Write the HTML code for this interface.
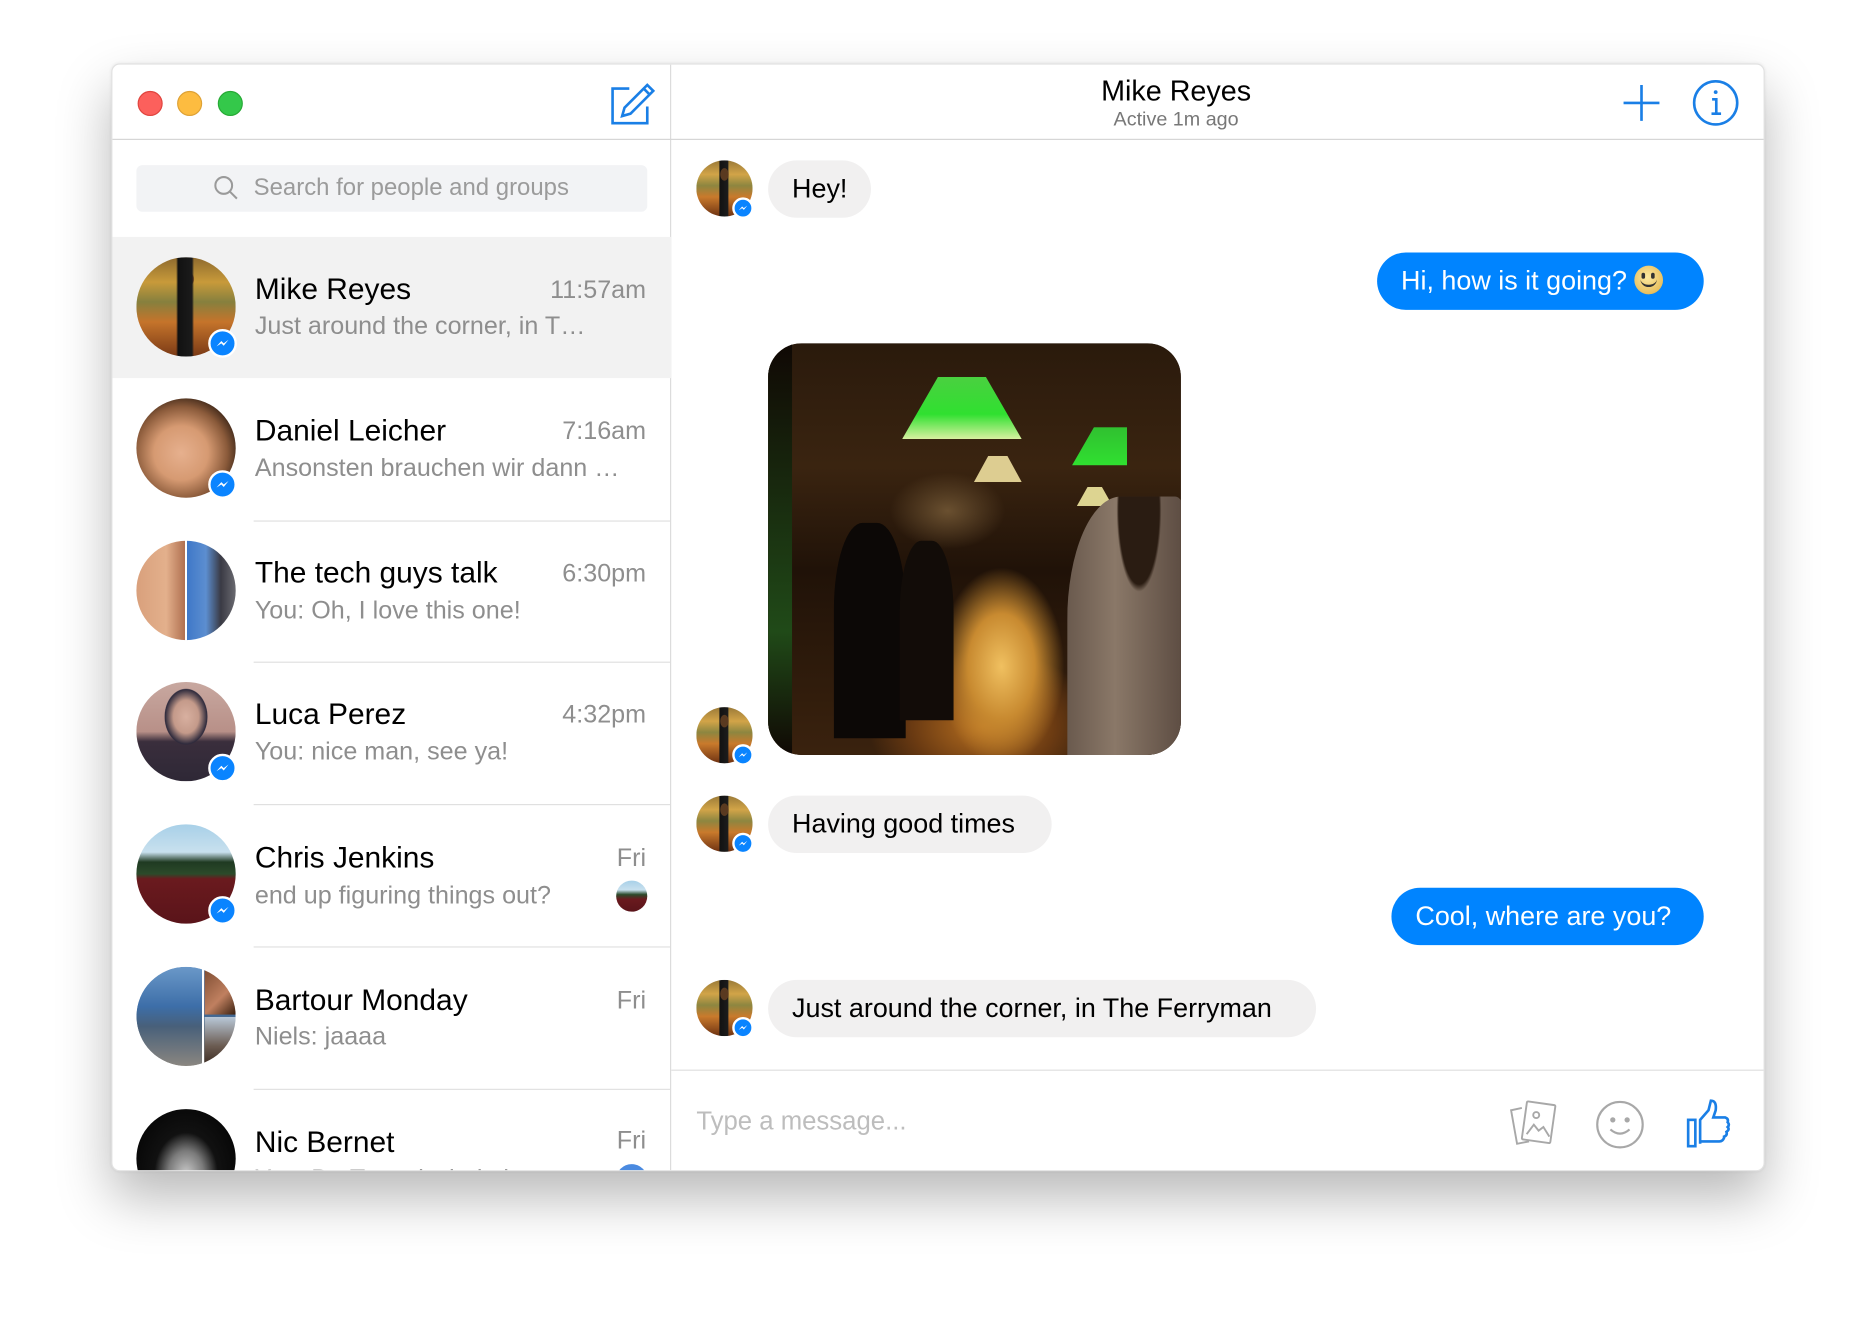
<!DOCTYPE html>
<html><head><meta charset="utf-8"><style>
*{box-sizing:border-box;margin:0;padding:0}
html,body{width:1876px;height:1332px;overflow:hidden;background:#fff;font-family:"Liberation Sans",Arial,sans-serif}
#stage{position:absolute;left:0;top:0;width:1568px;height:1114px;transform:scale(1.19643);transform-origin:0 0}
.win{position:absolute;left:93px;top:53px;width:1382px;height:926px;background:#fff;border-radius:7px;border:1px solid #e2e2e2;overflow:hidden;box-shadow:0 22px 45px rgba(0,0,0,.28),0 0 3px rgba(0,0,0,.08)}
.abs{position:absolute}
.dot{position:absolute;top:22px;width:21px;height:21px;border-radius:50%}
.side{position:absolute;left:0;top:0;width:467px;height:926px;border-right:1px solid #dcdcdc}
.hline{position:absolute;left:0;top:62px;width:1382px;height:1px;background:#d6d6d6}
.row{position:absolute;left:0;width:467px;height:118px}
.av{position:absolute;left:20px;width:83px;height:83px;border-radius:50%;overflow:hidden}
.badge{position:absolute;width:24px;height:24px;border-radius:50%;background:#0a84ff;border:2.5px solid #fff}
.badge svg{position:absolute;left:3px;top:3px}
.name{position:absolute;left:119px;font-size:25px;color:#000}
.prev{position:absolute;left:119px;font-size:21px;color:#8e8e8e;white-space:nowrap}
.time{position:absolute;right:20px;font-size:21px;color:#8e8e8e}
.div{position:absolute;left:118px;right:0;height:1px;background:#e0e0e0}
.bub{position:absolute;height:48px;border-radius:24px;font-size:22.5px;line-height:48px;padding:0 20px;white-space:nowrap}
.in{background:#f1f0f0;color:#000}
.out{background:#0084ff;color:#fff}
.mav{position:absolute;left:488px;width:47px;height:47px;border-radius:50%;overflow:hidden}
.mike{background:
 linear-gradient(90deg,transparent 40%,#111 42%,#1b1b1b 56%,transparent 58%) 0 0/100% 100% no-repeat,
 radial-gradient(circle at 50% 22%,#6a3b1e 8%,transparent 9%),
 linear-gradient(180deg,#8e6a2e 0%,#c89a3a 25%,#86803e 45%,#c5742b 65%,#7a3a16 100%)}
.mike2{background:
 radial-gradient(ellipse at 50% 25%,#5a3a20 10%,transparent 11%),
 linear-gradient(90deg,transparent 40%,#121212 42%,#1c1c1c 56%,transparent 58%),
 linear-gradient(180deg,#9a7a38 0%,#d2a448 25%,#8d8640 45%,#c97a2c 65%,#6e3212 100%)}
</style></head><body><div id="stage">
<div class="win">
 <div class="side">
  <div class="dot" style="left:21px;background:#fc605c;border:1px solid #e0443e"></div>
  <div class="dot" style="left:54px;background:#fdbc40;border:1px solid #dea236"></div>
  <div class="dot" style="left:88px;background:#34c84a;border:1px solid #27aa35"></div>
  <svg class="abs" style="left:414px;top:13px" width="40" height="40" viewBox="0 0 40 40" fill="none" stroke="#1a7fe6" stroke-width="2.2">
   <path d="M18 7H4v29h29V22"/><path d="M12 30l2-7L33 4l5 5-19 19z"/><path d="M30 7l5 5"/>
  </svg>
  <div class="abs" style="left:20px;top:84px;width:427px;height:39px;background:#f2f3f5;border-radius:5px"></div>
  <svg class="abs" style="left:84px;top:92px" width="22" height="22" viewBox="0 0 22 22" fill="none" stroke="#9a9a9a" stroke-width="1.7"><circle cx="9" cy="9" r="7"/><path d="M14 14l6 6"/></svg>
  <div class="abs" style="left:118px;top:92px;font-size:20px;color:#9b9b9b">Search for people and groups</div>

  <div class="row" style="top:144px;background:#f2f2f2"></div>
  <div class="av mike" style="top:161px"></div>
  <div class="badge" style="left:80px;top:221px"><svg width="14" height="14" viewBox="0 0 14 14"><path d="M2 9.5L6 5l2 2 4-3-4 5-2-2z" fill="#fff"/></svg></div>
  <div class="name" style="top:174px">Mike Reyes</div>
  <div class="time" style="top:177px">11:57am</div>
  <div class="prev" style="top:207px">Just around the corner, in T…</div>

  <div class="av" style="top:279px;background:radial-gradient(ellipse at 45% 55%,#e6b08e 0%,#d69a72 35%,#8a5a3a 60%,#2a1a10 80%);"></div>
  <div class="badge" style="left:80px;top:339px"><svg width="14" height="14" viewBox="0 0 14 14"><path d="M2 9.5L6 5l2 2 4-3-4 5-2-2z" fill="#fff"/></svg></div>
  <div class="name" style="top:292px">Daniel Leicher</div>
  <div class="time" style="top:295px">7:16am</div>
  <div class="prev" style="top:326px">Ansonsten brauchen wir dann …</div>
  <div class="div" style="top:381px"></div>

  <div class="av" style="top:398px;background:linear-gradient(90deg,#d9a07c 0%,#e3b08c 30%,#b07050 49%,#fff 49%,#fff 51%,#3f78c8 51%,#5c8ed0 70%,#3a3a44 85%,#6a6a70 100%)"></div>
  <div class="name" style="top:411px">The tech guys talk</div>
  <div class="time" style="top:414px">6:30pm</div>
  <div class="prev" style="top:445px">You: Oh, I love this one!</div>
  <div class="div" style="top:499px"></div>

  <div class="av" style="top:516px;background:radial-gradient(ellipse at 50% 35%,#d8b0a0 0%,#c49a8a 18%,#2e2a3c 30%,transparent 31%),linear-gradient(180deg,#c8a8a0 0%,#b89088 50%,#3a2e3c 60%,#2e2836 100%)"></div>
  <div class="badge" style="left:80px;top:576px"><svg width="14" height="14" viewBox="0 0 14 14"><path d="M2 9.5L6 5l2 2 4-3-4 5-2-2z" fill="#fff"/></svg></div>
  <div class="name" style="top:529px">Luca Perez</div>
  <div class="time" style="top:532px">4:32pm</div>
  <div class="prev" style="top:563px">You: nice man, see ya!</div>
  <div class="div" style="top:618px"></div>

  <div class="av" style="top:635px;background:linear-gradient(180deg,#a8d0e8 0%,#c8e0ee 28%,#1f3a22 38%,#2b4a2a 50%,#6a1a1e 55%,#5a141a 100%)"></div>
  <div class="badge" style="left:80px;top:695px"><svg width="14" height="14" viewBox="0 0 14 14"><path d="M2 9.5L6 5l2 2 4-3-4 5-2-2z" fill="#fff"/></svg></div>
  <div class="name" style="top:649px">Chris Jenkins</div>
  <div class="time" style="top:652px">Fri</div>
  <div class="prev" style="top:683px">end up figuring things out?</div>
  <div class="abs" style="left:421px;top:682px;width:26px;height:26px;border-radius:50%;background:linear-gradient(180deg,#a8d0e8 0%,#c8e0ee 30%,#2b4a2a 45%,#6a1a1e 60%,#5a141a 100%)"></div>
  <div class="div" style="top:737px"></div>

  <div class="av" style="top:754px;background:linear-gradient(90deg,transparent 66%,#fff 66%,#fff 68%,transparent 68%),linear-gradient(180deg,#6a98c8 0%,#3d6ea8 40%,#48607a 60%,#8a8680 100%)"></div>
  <div class="abs" style="left:77px;top:754px;width:26px;height:40px;background:linear-gradient(135deg,#7a4a30,#c08060 60%,#3a2010)"></div>
  <div class="abs" style="left:77px;top:796px;width:26px;height:41px;background:linear-gradient(180deg,#b8c8d8,#6a5a50 60%,#3a2a20)"></div>
  <div class="abs" style="left:20px;top:754px;width:83px;height:83px;border-radius:50%;box-shadow:0 0 0 30px #fff"></div>
  <div class="name" style="top:768px">Bartour Monday</div>
  <div class="time" style="top:771px">Fri</div>
  <div class="prev" style="top:801px">Niels: jaaaa</div>
  <div class="div" style="top:856px"></div>

  <div class="av" style="top:873px;background:radial-gradient(ellipse at 50% 65%,#c8c8c8 0%,#7a7a7a 25%,#111 45%,#000 100%)"></div>
  <div class="name" style="top:887px">Nic Bernet</div>
  <div class="time" style="top:888px">Fri</div>
  <div class="prev" style="top:920px;color:#999">You: De Tee mischt kt kt</div>
  <div class="abs" style="left:421px;top:919px;width:26px;height:26px;border-radius:50%;background:#4a8ae0"></div>
 </div>

 <div class="hline"></div>

 <div class="abs" style="left:689px;width:400px;top:9px;text-align:center;font-size:24px;color:#000">Mike Reyes</div>
 <div class="abs" style="left:689px;width:400px;top:37px;text-align:center;font-size:16.5px;color:#777">Active 1m ago</div>
 <svg class="abs" style="left:1262px;top:16px" width="32" height="32" viewBox="0 0 32 32" stroke="#1a7fe6" stroke-width="2.2"><path d="M16 1v30M1 16h30"/></svg>
 <svg class="abs" style="left:1320px;top:12px" width="40" height="40" viewBox="0 0 40 40" fill="none" stroke="#1a7fe6" stroke-width="2.2"><circle cx="20" cy="20" r="18"/><circle cx="20" cy="11" r="1.6" fill="#1a7fe6" stroke="none"/><path d="M17 17h3.5v12M16.5 29h8"/></svg>

 <div class="mav mike2" style="top:80px"></div>
 <div class="badge" style="left:518px;top:111px;width:18px;height:18px;border-width:2px"><svg width="10" height="10" viewBox="0 0 14 14" style="left:2px;top:2px"><path d="M2 9.5L6 5l2 2 4-3-4 5-2-2z" fill="#fff"/></svg></div>
 <div class="bub in" style="left:548px;top:80px">Hey!</div>

 <div class="bub out" style="left:1057px;top:157px;width:273px">Hi, how is it going? <span style="display:inline-block;width:24px;height:24px;border-radius:50%;background:radial-gradient(circle at 45% 40%,#fde9a0,#e8c060 70%,#b08a30);vertical-align:-4px;position:relative"><span style="position:absolute;left:6px;top:6px;width:3px;height:5px;background:#333;border-radius:2px"></span><span style="position:absolute;left:14px;top:6px;width:3px;height:5px;background:#333;border-radius:2px"></span><span style="position:absolute;left:5px;top:10px;width:14px;height:8px;border-bottom:2px solid #333;border-radius:0 0 8px 8px"></span></span></div>

 <div class="abs" style="left:548px;top:233px;width:345px;height:344px;border-radius:28px;overflow:hidden;background:#1a0e06">
  <div class="abs" style="left:0;top:0;width:345px;height:344px;background:
   radial-gradient(ellipse 70px 110px at 195px 270px,#f0c060 0%,#c88a30 40%,transparent 75%),
   radial-gradient(ellipse 120px 80px at 180px 320px,#b87020 0%,#6a3a12 50%,transparent 80%),
   radial-gradient(ellipse 60px 40px at 150px 140px,#6a5030 0%,transparent 80%),
   linear-gradient(180deg,#2a1a0c 0%,#3a2410 30%,#201208 55%,#3a220e 100%)"></div>
  <div class="abs" style="left:112px;top:28px;width:100px;height:52px;background:linear-gradient(180deg,#4ad040,#30e030 60%,#d8f0a0 100%);clip-path:polygon(30% 0,70% 0,100% 100%,0 100%)"></div>
  <div class="abs" style="left:254px;top:70px;width:46px;height:32px;background:linear-gradient(180deg,#30c030,#30e030);clip-path:polygon(40% 0,100% 0,100% 100%,0 100%)"></div>
  <div class="abs" style="left:172px;top:94px;width:40px;height:22px;background:#f0e0a0;clip-path:polygon(30% 0,70% 0,100% 100%,0 100%);opacity:.9"></div>
  <div class="abs" style="left:258px;top:120px;width:30px;height:16px;background:#f0e8a0;clip-path:polygon(30% 0,70% 0,100% 100%,0 100%);opacity:.9"></div>
  <div class="abs" style="left:250px;top:128px;width:100px;height:230px;background:radial-gradient(ellipse at 60% 5%,#2a1c12 20%,transparent 22%),linear-gradient(90deg,#6a5a4e,#8a7868 40%,#5a4a40);border-radius:45% 10% 0 0"></div>
  <div class="abs" style="left:55px;top:150px;width:60px;height:180px;background:#0c0806;border-radius:40% 40% 0 0"></div>
  <div class="abs" style="left:110px;top:165px;width:45px;height:150px;background:#120c08;border-radius:40% 40% 0 0"></div>
  <div class="abs" style="left:0;top:0;width:20px;height:344px;background:linear-gradient(180deg,#100804,#204a18 70%,#100804)"></div>
 </div>
 <div class="mav mike2" style="top:537px"></div>
 <div class="badge" style="left:518px;top:568px;width:18px;height:18px;border-width:2px"><svg width="10" height="10" viewBox="0 0 14 14" style="left:2px;top:2px"><path d="M2 9.5L6 5l2 2 4-3-4 5-2-2z" fill="#fff"/></svg></div>

 <div class="mav mike2" style="top:611px"></div>
 <div class="badge" style="left:518px;top:642px;width:18px;height:18px;border-width:2px"><svg width="10" height="10" viewBox="0 0 14 14" style="left:2px;top:2px"><path d="M2 9.5L6 5l2 2 4-3-4 5-2-2z" fill="#fff"/></svg></div>
 <div class="bub in" style="left:548px;top:611px;width:237px">Having good times</div>

 <div class="bub out" style="left:1069px;top:688px;width:261px">Cool, where are you?</div>

 <div class="mav mike2" style="top:765px"></div>
 <div class="badge" style="left:518px;top:796px;width:18px;height:18px;border-width:2px"><svg width="10" height="10" viewBox="0 0 14 14" style="left:2px;top:2px"><path d="M2 9.5L6 5l2 2 4-3-4 5-2-2z" fill="#fff"/></svg></div>
 <div class="bub in" style="left:548px;top:765px;width:458px">Just around the corner, in The Ferryman</div>

 <div class="abs" style="left:467px;top:840px;width:915px;height:1px;background:#e0e0e0"></div>
 <div class="abs" style="left:488px;top:871px;font-size:21.5px;color:#bdbdbd">Type a message...</div>
 <svg class="abs" style="left:1166px;top:864px" width="44" height="42" viewBox="0 0 44 42" fill="none" stroke="#a8a8a8" stroke-width="1.6"><path d="M12 8L3 10l5 28 10-2"/><rect x="14" y="4" width="24" height="32" rx="1" transform="rotate(8 26 20)"/><circle cx="24" cy="14" r="2.5"/><path d="M16 30l6-8 4 5 4-3 5 8"/></svg>
 <svg class="abs" style="left:1239px;top:865px" width="42" height="42" viewBox="0 0 42 42" fill="none" stroke="#a8a8a8" stroke-width="1.8"><circle cx="21" cy="21" r="19"/><circle cx="15" cy="17" r="1.3" fill="#a8a8a8"/><circle cx="27" cy="17" r="1.3" fill="#a8a8a8"/><path d="M13 25q8 7 16 0"/></svg>
 <svg class="abs" style="left:1314px;top:864px" width="40" height="42" viewBox="0 0 40 42" fill="none" stroke="#1a7fe6" stroke-width="2.2"><rect x="3" y="18" width="6" height="22"/><path d="M13 38V18l7-8 2-8q5 0 4 8l-2 6h10q3 1 2 4 2 2 0 4 2 2-1 4 1 3-2 4v1q-1 3-4 3H13"/></svg>
</div>
</div></body></html>
